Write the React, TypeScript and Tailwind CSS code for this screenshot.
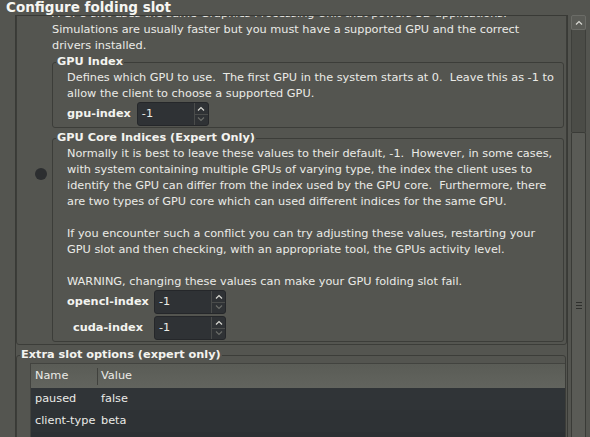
import type { ReactNode } from 'react';

const intro = [
    'A GPU slot uses the same Graphics Processing Unit that powers 3D applications.',
    'Simulations are usually faster but you must have a supported GPU and the correct',
    'drivers installed.',
];

const indexHelp = [
    'Defines which GPU to use.  The first GPU in the system starts at 0.  Leave this as -1 to',
    'allow the client to choose a supported GPU.',
];

const coreHelp = [
    'Normally it is best to leave these values to their default, -1.  However, in some cases,',
    'with system containing multiple GPUs of varying type, the index the client uses to',
    'identify the GPU can differ from the index used by the GPU core.  Furthermore, there',
    'are two types of GPU core which can used different indices for the same GPU.',
    '',
    'If you encounter such a conflict you can try adjusting these values, restarting your',
    'GPU slot and then checking, with an appropriate tool, the GPUs activity level.',
    '',
    'WARNING, changing these values can make your GPU folding slot fail.',
];

const options = [
    { name: 'paused', value: 'false' },
    { name: 'client-type', value: 'beta' },
];

function Lines({ lines }: { lines: string[] }) {
    return (
        <div>
            {lines.map((l, i) => (
                <div key={i} className="h-[16px] whitespace-pre">
                    {l}
                </div>
            ))}
        </div>
    );
}

function Chevron({ up, dim }: { up?: boolean; dim?: boolean }) {
    return (
        <svg
            width="8"
            height="5"
            viewBox="0 0 8 5"
            className={dim ? 'text-[#6a6c68]' : 'text-[#d8d8d2]'}
        >
            <path
                d={up ? 'M1 4.5 4 1.5 7 4.5' : 'M1 0.5 4 3.5 7 0.5'}
                fill="none"
                stroke="currentColor"
                strokeWidth="1.2"
            />
        </svg>
    );
}

function SpinBox({ value }: { value: string }) {
    return (
        <div className="flex h-[24px] w-[72px] shrink-0 overflow-hidden rounded-[3px] border border-[#25272a] bg-[#2f3235]">
            <span className="flex-1 pl-[4px] leading-[22px]">{value}</span>
            <div className="flex w-[14px] flex-col border-l border-[#4a4c4b]">
                <div className="flex flex-1 items-center justify-center border-b border-[#4a4c4b]">
                    <Chevron up />
                </div>
                <div className="flex flex-1 items-center justify-center">
                    <Chevron dim />
                </div>
            </div>
        </div>
    );
}

function Group({
    title,
    className,
    children,
}: {
    title: string;
    className?: string;
    children: ReactNode;
}) {
    return (
        <fieldset
            className={`min-w-0 rounded-[3px] border border-[#3c3d39] ${className ?? ''}`}
        >
            <legend className="ml-[3px] whitespace-nowrap px-[1px] font-bold leading-[16px] text-[#f3f3ef]">
                {title}
            </legend>
            {children}
        </fieldset>
    );
}

function Scrollbar() {
    return (
        <div className="ml-[3px] flex w-[15px] shrink-0 flex-col">
            <div className="flex h-[15px] items-center justify-center rounded-[2px] border border-[#6b6c67] bg-[#5a5b56]">
                <Chevron up />
            </div>
            <div className="h-[102px] border-x border-[#3e3f3b] bg-[#4b4c47]" />
            <div className="flex flex-1 flex-col items-center gap-[2px] rounded-t-[2px] border-x border-t border-[#3a3b37] bg-[#5a5b56] pt-[169px]">
                <div className="h-[1px] w-[6px] bg-[#2f302d]" />
                <div className="h-[1px] w-[6px] bg-[#2f302d]" />
                <div className="h-[1px] w-[6px] bg-[#2f302d]" />
            </div>
        </div>
    );
}

export default function App() {
    return (
        <div className="flex h-[437px] w-[590px] flex-col overflow-hidden bg-[#545550] font-['DejaVu_Sans',sans-serif] text-[11.3px] leading-[16px] text-[#ebebe7]">
            <div className="h-[15px] shrink-0 pl-[6px] text-[13.5px] font-bold leading-[15px] text-[#f6f6f2]">
                Configure folding slot
            </div>

            <div className="flex min-h-0 flex-1 pl-[15px]">
                {/* Scrolled viewport */}
                <div className="w-[553px] shrink-0 overflow-hidden border-x border-t border-[#393a36]">
                    <div className="-mt-[20px] rounded-[3px] border border-[#3c3d39] pb-[2px] pr-[2px] pt-[9px]">
                        <div className="ml-[35px]">
                            <Lines lines={intro} />
                        </div>

                        <Group title="GPU Index" className="ml-[35px] pb-[1px]">
                            <div className="pl-[14px]">
                                <Lines lines={indexHelp} />
                                <div className="flex items-center gap-[6px]">
                                    <span className="whitespace-nowrap font-bold text-[#f3f3ef]">gpu-index</span>
                                    <SpinBox value="-1" />
                                </div>
                            </div>
                        </Group>

                        <div className="mt-[2px] flex">
                            <div className="w-[35px] shrink-0">
                                <div className="ml-[18px] mt-[38px] h-[12px] w-[12px] rounded-full bg-[#2c2e30]" />
                            </div>
                            <Group title="GPU Core Indices (Expert Only)" className="flex-1 pb-[1px]">
                                <div className="pl-[14px]">
                                    <Lines lines={coreHelp} />
                                    <div className="grid grid-cols-[82px_auto] items-center justify-start gap-x-[5px] gap-y-[2px]">
                                        <span className="whitespace-nowrap text-center font-bold text-[#f3f3ef]">opencl-index</span>
                                        <SpinBox value="-1" />
                                        <span className="whitespace-nowrap text-center font-bold text-[#f3f3ef]">cuda-index</span>
                                        <SpinBox value="-1" />
                                    </div>
                                </div>
                            </Group>
                        </div>
                    </div>

                    <Group title="Extra slot options (expert only)" className="mr-[1px] mt-[2px]">
                        <div className="ml-[13px] border-l border-t border-[#42433f]">
                            <div className="flex h-[24px] items-center bg-gradient-to-b from-[#5a5c56] to-[#62645e]">
                                <span className="w-[66px] pl-[4px]">Name</span>
                                <span className="h-[17px] w-[1px] bg-[#40413d]" />
                                <span className="pl-[3px]">Value</span>
                            </div>
                            {options.map((o, i) => (
                                <div
                                    key={o.name}
                                    className={`flex h-[22px] items-center ${i % 2 === 0 ? 'bg-[#303437]' : 'bg-[#2e3235]'}`}
                                >
                                    <span className="w-[67px] whitespace-nowrap pl-[4px]">{o.name}</span>
                                    <span className="pl-[3px]">{o.value}</span>
                                </div>
                            ))}
                            <div className="h-[60px] bg-[#2c3033]" />
                        </div>
                    </Group>
                </div>

                <Scrollbar />
            </div>
        </div>
    );
}
